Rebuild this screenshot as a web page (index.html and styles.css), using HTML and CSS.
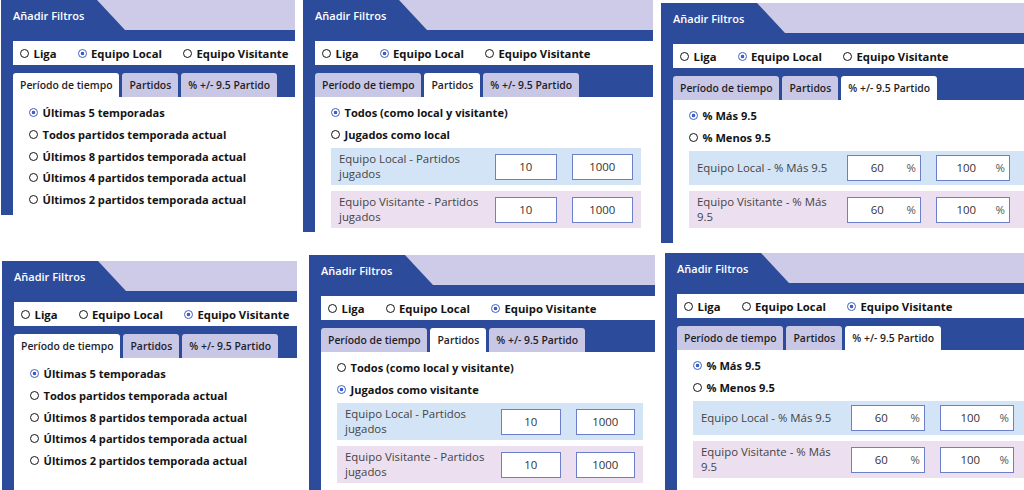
FILE: index.html
```html
<!DOCTYPE html>
<html lang="es">
<head>
    <meta charset="UTF-8">
    <meta name="viewport" content="width=device-width, initial-scale=1.0">
    <title>Añadir Filtros</title>
    <link rel="stylesheet" href="styles.css">
</head>
<body>
    <div class="collage">

        <!-- 1: equipo local, periodo -->
        <section class="panel p1">
            <div class="panel-head"><span class="panel-title">Añadir Filtros</span></div>
            <div class="scope">
                <span class="opt"><span class="dot"></span>Liga</span>
                <span class="opt"><span class="dot on"></span>Equipo Local</span>
                <span class="opt"><span class="dot"></span>Equipo Visitante</span>
            </div>
            <div class="tabs">
                <span class="tab active">Período de tiempo</span>
                <span class="tab">Partidos</span>
                <span class="tab">% +/- 9.5 Partido</span>
            </div>
            <div class="pane">
                <div class="choice"><span class="dot on"></span>Últimas 5 temporadas</div>
                <div class="choice"><span class="dot"></span>Todos partidos temporada actual</div>
                <div class="choice"><span class="dot"></span>Últimos 8 partidos temporada actual</div>
                <div class="choice"><span class="dot"></span>Últimos 4 partidos temporada actual</div>
                <div class="choice"><span class="dot"></span>Últimos 2 partidos temporada actual</div>
            </div>
        </section>

        <!-- 2: equipo local, partidos -->
        <section class="panel p2">
            <div class="panel-head"><span class="panel-title">Añadir Filtros</span></div>
            <div class="scope">
                <span class="opt"><span class="dot"></span>Liga</span>
                <span class="opt"><span class="dot on"></span>Equipo Local</span>
                <span class="opt"><span class="dot"></span>Equipo Visitante</span>
            </div>
            <div class="tabs">
                <span class="tab">Período de tiempo</span>
                <span class="tab active">Partidos</span>
                <span class="tab">% +/- 9.5 Partido</span>
            </div>
            <div class="pane">
                <div class="choice"><span class="dot on"></span>Todos (como local y visitante)</div>
                <div class="choice"><span class="dot"></span>Jugados como local</div>
                <div class="field local">
                    <span class="label">Equipo Local - Partidos jugados</span>
                    <span class="num">10</span>
                    <span class="num">1000</span>
                </div>
                <div class="field visit">
                    <span class="label">Equipo Visitante - Partidos jugados</span>
                    <span class="num">10</span>
                    <span class="num">1000</span>
                </div>
            </div>
        </section>

        <!-- 3: equipo local, % +/- 9.5 -->
        <section class="panel p3">
            <div class="panel-head"><span class="panel-title">Añadir Filtros</span></div>
            <div class="scope">
                <span class="opt"><span class="dot"></span>Liga</span>
                <span class="opt"><span class="dot on"></span>Equipo Local</span>
                <span class="opt"><span class="dot"></span>Equipo Visitante</span>
            </div>
            <div class="tabs">
                <span class="tab">Período de tiempo</span>
                <span class="tab">Partidos</span>
                <span class="tab active">% +/- 9.5 Partido</span>
            </div>
            <div class="pane">
                <div class="choice"><span class="dot on"></span>% Más 9.5</div>
                <div class="choice"><span class="dot"></span>% Menos 9.5</div>
                <div class="field pct-row local">
                    <span class="label">Equipo Local - % Más 9.5</span>
                    <span class="num pct"><span class="val">60</span><span class="unit">%</span></span>
                    <span class="num pct"><span class="val">100</span><span class="unit">%</span></span>
                </div>
                <div class="field pct-row visit">
                    <span class="label">Equipo Visitante - % Más 9.5</span>
                    <span class="num pct"><span class="val">60</span><span class="unit">%</span></span>
                    <span class="num pct"><span class="val">100</span><span class="unit">%</span></span>
                </div>
            </div>
        </section>

        <!-- 4: equipo visitante, periodo -->
        <section class="panel p4">
            <div class="panel-head"><span class="panel-title">Añadir Filtros</span></div>
            <div class="scope">
                <span class="opt"><span class="dot"></span>Liga</span>
                <span class="opt"><span class="dot"></span>Equipo Local</span>
                <span class="opt"><span class="dot on"></span>Equipo Visitante</span>
            </div>
            <div class="tabs">
                <span class="tab active">Período de tiempo</span>
                <span class="tab">Partidos</span>
                <span class="tab">% +/- 9.5 Partido</span>
            </div>
            <div class="pane">
                <div class="choice"><span class="dot on"></span>Últimas 5 temporadas</div>
                <div class="choice"><span class="dot"></span>Todos partidos temporada actual</div>
                <div class="choice"><span class="dot"></span>Últimos 8 partidos temporada actual</div>
                <div class="choice"><span class="dot"></span>Últimos 4 partidos temporada actual</div>
                <div class="choice"><span class="dot"></span>Últimos 2 partidos temporada actual</div>
            </div>
        </section>

        <!-- 5: equipo visitante, partidos -->
        <section class="panel p5">
            <div class="panel-head"><span class="panel-title">Añadir Filtros</span></div>
            <div class="scope">
                <span class="opt"><span class="dot"></span>Liga</span>
                <span class="opt"><span class="dot"></span>Equipo Local</span>
                <span class="opt"><span class="dot on"></span>Equipo Visitante</span>
            </div>
            <div class="tabs">
                <span class="tab">Período de tiempo</span>
                <span class="tab active">Partidos</span>
                <span class="tab">% +/- 9.5 Partido</span>
            </div>
            <div class="pane">
                <div class="choice"><span class="dot"></span>Todos (como local y visitante)</div>
                <div class="choice"><span class="dot on"></span>Jugados como visitante</div>
                <div class="field local">
                    <span class="label">Equipo Local - Partidos jugados</span>
                    <span class="num">10</span>
                    <span class="num">1000</span>
                </div>
                <div class="field visit">
                    <span class="label">Equipo Visitante - Partidos jugados</span>
                    <span class="num">10</span>
                    <span class="num">1000</span>
                </div>
            </div>
        </section>

        <!-- 6: equipo visitante, % +/- 9.5 -->
        <section class="panel p6">
            <div class="panel-head"><span class="panel-title">Añadir Filtros</span></div>
            <div class="scope">
                <span class="opt"><span class="dot"></span>Liga</span>
                <span class="opt"><span class="dot"></span>Equipo Local</span>
                <span class="opt"><span class="dot on"></span>Equipo Visitante</span>
            </div>
            <div class="tabs">
                <span class="tab">Período de tiempo</span>
                <span class="tab">Partidos</span>
                <span class="tab active">% +/- 9.5 Partido</span>
            </div>
            <div class="pane">
                <div class="choice"><span class="dot on"></span>% Más 9.5</div>
                <div class="choice"><span class="dot"></span>% Menos 9.5</div>
                <div class="field pct-row local">
                    <span class="label">Equipo Local - % Más 9.5</span>
                    <span class="num pct"><span class="val">60</span><span class="unit">%</span></span>
                    <span class="num pct"><span class="val">100</span><span class="unit">%</span></span>
                </div>
                <div class="field pct-row visit">
                    <span class="label">Equipo Visitante - % Más 9.5</span>
                    <span class="num pct"><span class="val">60</span><span class="unit">%</span></span>
                    <span class="num pct"><span class="val">100</span><span class="unit">%</span></span>
                </div>
            </div>
        </section>

    </div>
</body>
</html>
```

FILE: styles.css
```css
body {
    margin: 0;
    width: 1024px;
    height: 490px;
    overflow: hidden;
    background: #fff;
    font-family: "Open Sans", "Noto Sans", sans-serif;
    color: #141414;
}

.collage {
    display: grid;
    grid-template-columns: 300px 360px 364px;
    grid-template-rows: 245px 245px;
}

/* each screenshot sits a little off its cell */
.panel {
    background: #2c4b9b;
    padding-left: 12px;
    box-sizing: border-box;
    display: flex;
    flex-direction: column;
    overflow: hidden;
}
.p1 { margin-left: 1px; width: 294px; height: 215px; }
.p2 { margin-left: 3px; width: 350px; height: 232px; }
.p3 { margin-left: 1px; margin-top: 3px; width: 363px; height: 240px; }
.p4 { margin-left: 2px; margin-top: 16px; width: 295px; height: 240px; }
.p5 { margin-left: 9px; margin-top: 10px; width: 346px; height: 240px; }
.p6 { margin-left: 5px; margin-top: 8px; width: 359px; height: 240px; }

.panel-head {
    margin-left: -12px;
    height: 30px;
    flex: none;
    background: #cecbe8;
}

.panel-title {
    display: block;
    width: 124px;
    height: 30px;
    box-sizing: border-box;
    padding-left: 12px;
    line-height: 31px;
    background: #2c4b9b;
    clip-path: polygon(0 0, 96px 0, 100% 100%, 0 100%);
    color: #fff;
    font-size: 11px;
    font-weight: 600;
}

.scope {
    margin-top: 11px;
    height: 24px;
    flex: none;
    background: #fff;
    display: flex;
    align-items: center;
    gap: 21px;
    padding-left: 7px;
}

.opt, .choice {
    display: flex;
    align-items: center;
    gap: 4.5px;
    font-size: 11.1px;
    font-weight: 700;
    white-space: nowrap;
}
.opt { font-size: 11.3px; }

.dot {
    width: 9px;
    height: 9px;
    flex: none;
    box-sizing: border-box;
    border: 1.7px solid #151515;
    border-radius: 50%;
    background: #fff;
}
.dot.on {
    border-color: #4061c2;
    background: radial-gradient(circle, #4061c2 0 1.6px, #fff 2.1px);
}

.tabs {
    margin-top: 8px;
    height: 24px;
    flex: none;
    display: flex;
    gap: 3px;
}

.tab {
    padding: 0 7px;
    line-height: 25px;
    background: #c9c7e6;
    border-radius: 3px 3px 0 0;
    font-size: 10.4px;
    font-weight: 600;
    color: #1e1e28;
    white-space: nowrap;
}
.tab.active { background: #fff; }

.pane {
    flex: 1;
    background: #fff;
    padding: 5px 0 0 16px;
}

.choice { height: 21.7px; }

.field {
    display: flex;
    align-items: center;
    margin-top: 3px;
    margin-right: 12px;
    padding: 4px 8px;
    min-height: 26px;
    font-size: 11.4px;
    line-height: 14.5px;
    color: #444;
}
.field + .field { margin-top: 6px; }
.field.local { background: #d3e4f6; }
.field.visit { background: #ecdff0; }

.label {
    flex: 0 0 156px;
    box-sizing: border-box;
    padding-right: 10px;
}
.pct-row .label { flex-basis: 150px; }
.pct-row { margin-right: 0; padding-right: 12px; }

.num {
    width: 62px;
    height: 26px;
    box-sizing: border-box;
    border: 1.5px solid #6b80c8;
    background: #fff;
    text-align: center;
    line-height: 23px;
    color: #333;
}
.num + .num { margin-left: 15px; }

.num.pct {
    width: 74px;
    display: flex;
    justify-content: space-between;
    padding-right: 4px;
}
.pct .val { width: 60px; }
.pct .unit { color: #555; }
```
